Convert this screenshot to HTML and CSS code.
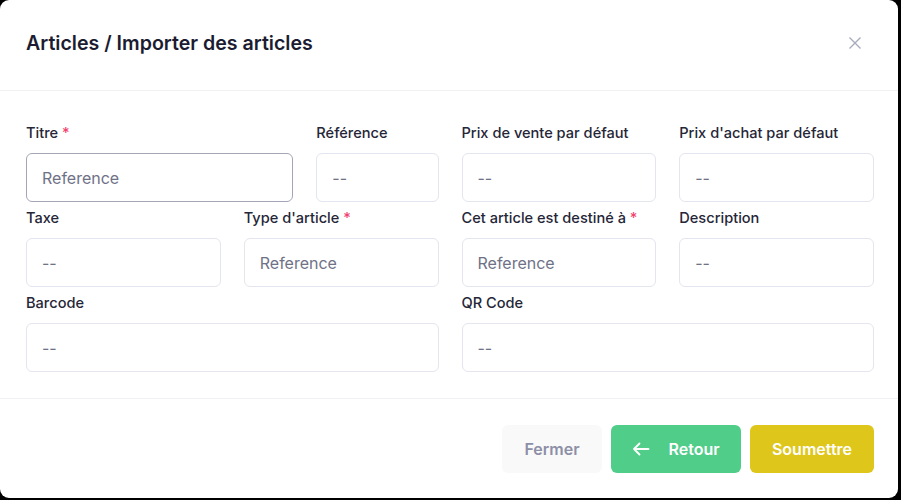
FILE: index.html
```html
<!DOCTYPE html>
<html lang="fr">
<head>
    <meta charset="UTF-8">
    <meta name="viewport" content="width=device-width, initial-scale=1.0">
    <title>Articles / Importer des articles</title>
    <link rel="stylesheet" href="styles.css">
</head>
<body>
    <!-- Fenêtre modale d'import -->
    <div class="modal">
        <div class="modal-header">
            <h2 class="modal-title">Articles / Importer des articles</h2>
            <button class="btn-close" type="button" aria-label="Fermer">
                <svg width="14" height="14" viewBox="0 0 14 14">
                    <path d="M1.5 1.5 L12.5 12.5 M12.5 1.5 L1.5 12.5" stroke="#a8aabd" stroke-width="1.4" fill="none"/>
                </svg>
            </button>
        </div>

        <div class="modal-body">
            <div class="row">
                <div class="half split">
                    <div class="field">
                        <label>Titre <span class="req">*</span></label>
                        <input class="input input-focus" type="text" placeholder="Reference">
                    </div>
                    <div class="field">
                        <label>Référence</label>
                        <input class="input" type="text" placeholder="--">
                    </div>
                </div>
                <div class="half">
                    <div class="field">
                        <label>Prix de vente par défaut</label>
                        <input class="input" type="text" placeholder="--">
                    </div>
                    <div class="field">
                        <label>Prix d'achat par défaut</label>
                        <input class="input" type="text" placeholder="--">
                    </div>
                </div>
            </div>

            <div class="row">
                <div class="half">
                    <div class="field">
                        <label>Taxe</label>
                        <input class="input" type="text" placeholder="--">
                    </div>
                    <div class="field">
                        <label>Type d'article <span class="req">*</span></label>
                        <input class="input" type="text" placeholder="Reference">
                    </div>
                </div>
                <div class="half">
                    <div class="field">
                        <label>Cet article est destiné à <span class="req">*</span></label>
                        <input class="input" type="text" placeholder="Reference">
                    </div>
                    <div class="field">
                        <label>Description</label>
                        <input class="input" type="text" placeholder="--">
                    </div>
                </div>
            </div>

            <div class="row">
                <div class="field">
                    <label>Barcode</label>
                    <input class="input" type="text" placeholder="--">
                </div>
                <div class="field">
                    <label>QR Code</label>
                    <input class="input" type="text" placeholder="--">
                </div>
            </div>
        </div>

        <div class="modal-footer">
            <button class="btn btn-light" type="button">Fermer</button>
            <button class="btn btn-success" type="button">
                <svg width="18" height="14" viewBox="0 0 18 14">
                    <path d="M16.5 7 H2 M7.5 1.5 L2 7 L7.5 12.5" stroke="#fff" stroke-width="1.8" fill="none" stroke-linecap="round" stroke-linejoin="round"/>
                </svg>
                Retour
            </button>
            <button class="btn btn-warning" type="button">Soumettre</button>
        </div>
    </div>
</body>
</html>
```

FILE: styles.css
```css
*{
    box-sizing: border-box;
}

body{
    margin: 0;
    background: #000;
    font-family: Inter, "Noto Sans", sans-serif;
}

.modal{
    width: 898px;
    height: 498px;
    background: #fff;
    border-radius: 9px;
    display: flex;
    flex-direction: column;
}

.modal-header{
    height: 91px;
    padding: 0 24px 4px 26px;
    display: flex;
    align-items: center;
    justify-content: space-between;
    border-bottom: 1px solid #f1f1f4;
}

.modal-title{
    margin: 0;
    font-size: 19.6px;
    font-weight: 600;
    color: #1b1c31;
}

.btn-close{
    border: 0;
    background: none;
    padding: 0;
    margin-right: 12px;
    width: 14px;
    height: 14px;
    display: flex;
}

.modal-body{
    padding: 32px 24px 0 26px;
    height: 308px;
    border-bottom: 1px solid #f1f1f4;
}

.row{
    display: grid;
    grid-template-columns: 1fr 1fr;
    gap: 23px;
    margin-bottom: 6px;
}

.half{
    display: grid;
    grid-template-columns: 1fr 1fr;
    gap: 23px;
}

.half.split{
    grid-template-columns: calc(66.667% - 7.67px) 1fr;
}

.field label{
    display: block;
    font-size: 14.6px;
    font-weight: 500;
    line-height: 20px;
    color: #252637;
    margin-bottom: 10px;
}

.req{
    color: #f1416c;
}

.input{
    display: block;
    width: 100%;
    height: 49px;
    border: 1px solid #e4e5ee;
    border-radius: 6px;
    padding: 0 15px;
    font-family: inherit;
    font-size: 16px;
    color: #252637;
    background: #fff;
    outline: none;
}

.input::placeholder{
    color: #6f7287;
}

.input-focus{
    border-color: #a4a6b6;
}

.modal-footer{
    flex: 1;
    display: flex;
    align-items: center;
    justify-content: flex-end;
    gap: 9px;
    padding: 0 24px 0 0;
}

.btn{
    height: 48px;
    border: 0;
    border-radius: 6px;
    font-family: inherit;
    font-size: 16px;
    font-weight: 600;
    display: flex;
    align-items: center;
    justify-content: center;
}

.btn-light{
    width: 100px;
    background: #f9f9f9;
    color: #8d8fa6;
}

.btn-success{
    width: 130px;
    background: #50cd89;
    color: #fff;
    gap: 18px;
    padding-right: 6px;
}

.btn-warning{
    width: 124px;
    background: #dec61b;
    color: #fff;
}
```
